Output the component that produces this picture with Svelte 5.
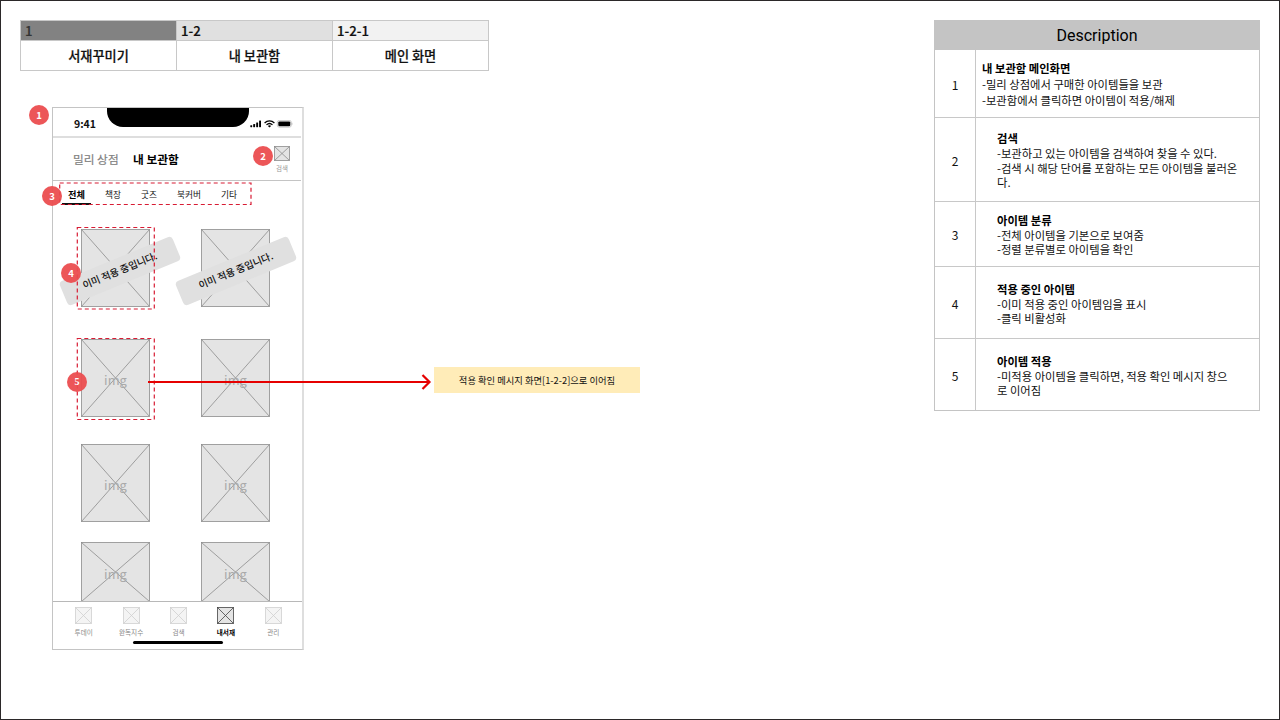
<script lang="ts">
  interface Thumb {
    height: number;
    applied?: boolean;
    /** Horizontal nudge of the "applied" ribbon from the thumb centre. */
    shift?: number;
  }

  const path = [
    { code: '1', label: '서재꾸미기' },
    { code: '1-2', label: '내 보관함' },
    { code: '1-2-1', label: '메인 화면' },
  ];

  const categories = ['전체', '책장', '굿즈', '북커버', '기타'];

  const thumbs: Thumb[] = [
    { height: 78, applied: true, shift: 5 },
    { height: 78, applied: true, shift: 1 },
    { height: 78 },
    { height: 78 },
    { height: 78 },
    { height: 78 },
    { height: 60 },
    { height: 60 },
  ];

  const navItems = ['투데이', '완독지수', '검색', '내서재', '관리'];

  const notes = [
    { title: '내 보관함 메인화면', lines: ['-밀리 상점에서 구매한 아이템들을 보관', '-보관함에서 클릭하면 아이템이 적용/해제'] },
    { title: '검색', lines: ['-보관하고 있는 아이템을 검색하여 찾을 수 있다.', '-검색 시 해당 단어를 포함하는 모든 아이템을 불러온', '다.'] },
    { title: '아이템 분류', lines: ['-전체 아이템을 기본으로 보여줌', '-정렬 분류별로 아이템을 확인'] },
    { title: '적용 중인 아이템', lines: ['-이미 적용 중인 아이템임을 표시', '-클릭 비활성화'] },
    { title: '아이템 적용', lines: ['-미적용 아이템을 클릭하면, 적용 확인 메시지 창으', '로 이어짐'] },
  ];

  let activeCategory = $state('전체');
  let activeNav = $state('내서재');
</script>

{#snippet placeholder(w: number, h: number)}
  <svg class="cross" width={w} height={h} viewBox="0 0 {w} {h}" aria-hidden="true">
    <rect x="0.5" y="0.5" width={w - 1} height={h - 1} />
    <path d="M0.5 0.5L{w - 0.5} {h - 0.5}M{w - 0.5} 0.5L0.5 {h - 0.5}" />
  </svg>
{/snippet}

<div class="board">
  <div class="left">
    <div class="path">
      {#each path as step, i}
        <div class="step">
          <div class="code level-{i + 1}">{step.code}</div>
          <div class="label">{step.label}</div>
        </div>
      {/each}
    </div>

    <div class="phone">
      <div class="status">
        <span class="time">9:41</span>
        <div class="notch"></div>
        <svg class="signals" width="43" height="8" viewBox="0 0 43 8" aria-hidden="true">
          <rect x="0.3" y="5.2" width="1.9" height="2" rx="0.4" />
          <rect x="3.2" y="4" width="1.9" height="3.2" rx="0.4" />
          <rect x="6.2" y="2.4" width="1.9" height="4.8" rx="0.4" />
          <rect x="9.1" y="0.6" width="1.9" height="6.6" rx="0.4" />
          <path class="arc" d="M14.6 2.9C17.4 0.3 21.6 0.3 24.4 2.9M16.5 4.9C18.2 3.3 20.8 3.3 22.5 4.9" />
          <path d="M17.9 6L19.5 7.6L21.1 6C20.2 5.1 18.8 5.1 17.9 6Z" />
          <rect class="shell" x="27.3" y="0.4" width="14" height="6.8" rx="2" />
          <rect x="28.3" y="1.4" width="12" height="4.8" rx="1.2" />
          <path class="tip" d="M42 2.8V4.8" />
        </svg>
      </div>

      <div class="header">
        <span class="store">밀리 상점</span>
        <span class="mine">내 보관함</span>
        <div class="search">
          {@render placeholder(16, 15)}
          <span>검색</span>
        </div>
      </div>

      <div class="categories">
        {#each categories as category}
          <button
            type="button"
            class:active={category === activeCategory}
            onclick={() => (activeCategory = category)}
          >{category}</button>
        {/each}
      </div>

      <div class="grid">
        {#each thumbs as thumb}
          <div class="thumb">
            {#if !thumb.applied}
              <span class="img" style:line-height="{thumb.height + 3}px">img</span>
            {/if}
            {@render placeholder(69, thumb.height)}
            {#if thumb.applied}
              <div class="ribbon" style:margin-left="{thumb.shift}px">이미 적용 중입니다.</div>
            {/if}
          </div>
        {/each}
      </div>

      <div class="nav">
        {#each navItems as item}
          <button type="button" class:active={item === activeNav} onclick={() => (activeNav = item)}>
            {@render placeholder(17, 17)}
            <span>{item}</span>
          </button>
        {/each}
        <div class="home"></div>
      </div>
    </div>
  </div>

  <div class="description">
    <div class="heading">Description</div>
    {#each notes as note, i}
      <div class="note note-{i + 1}">
        <div class="number">{i + 1}</div>
        <div class="text">
          <strong>{note.title}</strong>
          {#each note.lines as line}
            <span>{line}</span>
          {/each}
        </div>
      </div>
    {/each}
  </div>

  <!-- Annotations drawn over the wireframe -->
  <svg class="overlay" width="1280" height="720" viewBox="0 0 1280 720" aria-hidden="true">
    <g class="dashes">
      <rect x="59.7" y="183" width="191.3" height="21.5" />
      <rect x="77.3" y="227.5" width="77" height="81.5" />
      <rect x="77.3" y="338.5" width="77" height="81" />
    </g>
    <path class="arrow" d="M148 382H429.5M422.5 375L429.5 382L422.5 389" />
  </svg>
  <div class="callout">적용 확인 메시지 화면[1-2-2]으로 이어짐</div>
  <span class="badge b1">1</span>
  <span class="badge b2">2</span>
  <span class="badge b3">3</span>
  <span class="badge b4">4</span>
  <span class="badge b5">5</span>
</div>

<style>
  :global(body) {
    background: #fff;
  }

  .board {
    position: relative;
    box-sizing: border-box;
    display: flex;
    justify-content: space-between;
    align-items: flex-start;
    width: 1280px;
    height: 720px;
    padding: 19px 19px 0 20px;
    border: 1px solid #2b2829;
    overflow: hidden;
    color: #111;
    font-family: 'Noto Sans CJK KR', sans-serif;
    white-space: nowrap;
  }

  button {
    padding: 0;
    border: 0;
    background: none;
    color: inherit;
    font: inherit;
    cursor: pointer;
  }

  .path {
    display: flex;
    box-sizing: border-box;
    width: 469px;
    height: 51px;
    margin-left: -1px;
    border: 1px solid #c8c8c8;
    border-right: 0;
  }

  .step {
    box-sizing: border-box;
    width: 156px;
    border-right: 1px solid #c8c8c8;
    font-size: 13.2px;
    font-weight: 500;
    -webkit-text-stroke: 0.2px;
  }

  .code {
    height: 19px;
    padding-left: 4px;
    border-bottom: 1px solid #c8c8c8;
    line-height: 20px;
  }

  .level-1 {
    background: #828282;
    color: #333;
  }

  .level-2 {
    background: #e0e0e0;
  }

  .level-3 {
    background: #f2f2f2;
  }

  .label {
    line-height: 30px;
    text-align: center;
  }

  .phone {
    box-sizing: border-box;
    display: flex;
    flex-direction: column;
    width: 252px;
    height: 543px;
    margin: 36px 0 0 31px;
    border: 1px solid #c4c4c4;
    border-right: 2px solid #dedede;
  }

  .status {
    display: flex;
    box-sizing: border-box;
    height: 30px;
    margin-right: 1px;
    padding-left: 21px;
    border-bottom: 2px solid #dedede;
  }

  .time {
    width: 33px;
    font-size: 10.5px;
    font-weight: 700;
    line-height: 32px;
  }

  .notch {
    width: 142px;
    height: 19px;
    border-radius: 0 0 16px 16px;
    background: #000;
  }

  .signals {
    margin: 12px -2px 0 1px;
  }

  .signals .arc {
    fill: none;
    stroke: #000;
    stroke-width: 1.3;
  }

  .signals .shell,
  .signals .tip {
    fill: none;
    stroke: #aaa;
    stroke-width: 0.6;
  }

  .header {
    display: flex;
    box-sizing: border-box;
    height: 43px;
    margin-right: 1px;
    padding: 0 11px 0 20px;
    border-bottom: 1px solid #c4c4c4;
    font-size: 11.7px;
    line-height: 42px;
  }

  .store {
    width: 60px;
    color: #828282;
    -webkit-text-stroke: 0.2px;
  }

  .mine {
    color: #000;
    font-weight: 700;
  }

  .cross {
    display: block;
    fill: none;
    stroke: #8c8c8c;
    stroke-width: 0.8;
  }

  .cross rect {
    fill: #e4e4e4;
  }

  .search {
    display: flex;
    flex-direction: column;
    align-items: center;
    margin: 8px 0 0 auto;
    color: #999;
    font-size: 6.5px;
    line-height: 14px;
  }

  .categories {
    display: flex;
    gap: 20px;
    height: 24px;
    padding-left: 9px;
    font-size: 8.7px;
    line-height: 27px;
  }

  .categories button {
    box-sizing: border-box;
    height: 24px;
  }

  .categories .active {
    width: 29px;
    margin-right: -6px;
    border-bottom: 2px solid #111;
    color: #000;
    font-size: 9.2px;
    font-weight: 700;
  }

  .grid {
    display: grid;
    grid-template-columns: 120px 69px;
    grid-template-rows: 110px 105px 98px 60px;
    align-items: start;
    padding: 24px 0 0 28px;
  }

  .thumb {
    position: relative;
    width: 69px;
  }

  .img {
    position: absolute;
    inset: 0;
    color: #aaa;
    font-size: 12.9px;
    text-align: center;
  }

  .thumb .cross rect {
    fill: rgba(0, 0, 0, 0.105);
  }

  .ribbon {
    position: absolute;
    top: 29px;
    left: -27px;
    box-sizing: border-box;
    width: 122px;
    height: 26px;
    border-radius: 4px;
    background: #e0e0e0;
    color: #111;
    font-size: 9.8px;
    font-weight: 500;
    line-height: 25px;
    text-align: center;
    transform: rotate(-22.4deg);
  }

  .nav {
    position: relative;
    display: grid;
    grid-template-columns: repeat(5, 47.4px);
    flex: 1;
    align-items: start;
    margin-top: -1px;
    padding: 5px 0 0 7px;
    border-top: 1px solid #b8b8b8;
    color: #888;
    font-size: 6.6px;
  }

  .nav button {
    display: flex;
    flex-direction: column;
    align-items: center;
    line-height: 16px;
  }

  .nav button:not(.active) .cross {
    opacity: 0.4;
  }

  .nav .active {
    color: #000;
    font-weight: 700;
  }

  .nav .active .cross {
    stroke: #444;
  }

  .home {
    position: absolute;
    bottom: 5px;
    left: 80px;
    width: 90px;
    height: 3px;
    border-radius: 2px;
    background: #000;
  }

  .description {
    box-sizing: border-box;
    width: 326px;
    border: 1px solid #c4c4c4;
    font-size: 11.32px;
  }

  .heading {
    height: 28px;
    border-bottom: 1px solid #c4c4c4;
    background: #c4c4c4;
    color: #000;
    font-family: Roboto, sans-serif;
    font-size: 16px;
    line-height: 29px;
    text-align: center;
  }

  .note {
    display: flex;
    box-sizing: border-box;
    border-bottom: 1px solid #c8c8c8;
  }

  .note:last-child {
    border-bottom: 0;
  }

  .number {
    display: flex;
    align-items: center;
    justify-content: center;
    box-sizing: border-box;
    width: 41px;
    padding-top: 1px;
    border-right: 1px solid #c8c8c8;
    font-size: 12px;
  }

  .text {
    display: flex;
    flex-direction: column;
    justify-content: center;
    padding: 2px 0 0 21px;
    line-height: 14.7px;
  }

  .text strong {
    color: #000;
  }

  .note-1 {
    height: 68px;
  }

  .note-1 .text {
    padding: 1px 0 0 6px;
    line-height: 16px;
  }

  .note-2 {
    height: 84px;
  }

  .note-3 {
    height: 65px;
  }

  .note-4 {
    height: 72px;
  }

  .note-4 .text,
  .note-5 .text {
    padding-top: 3px;
  }

  .note-5 {
    height: 71px;
  }

  .overlay {
    position: absolute;
    top: -1px;
    left: -1px;
    fill: none;
  }

  .dashes {
    stroke: #d81c34;
    stroke-width: 1.2;
    stroke-dasharray: 4 3;
  }

  .arrow {
    stroke: #e60000;
    stroke-width: 2.2;
  }

  .callout {
    position: absolute;
    top: 366px;
    left: 433px;
    width: 206px;
    height: 26px;
    background: #ffecb8;
    font-size: 9.3px;
    line-height: 27px;
    text-align: center;
  }

  .badge {
    position: absolute;
    width: 20px;
    height: 20px;
    border-radius: 50%;
    background: rgba(235, 75, 78, 0.94);
    color: #fff;
    font-size: 9.5px;
    font-weight: 700;
    line-height: 20px;
    text-align: center;
  }

  .b1 {
    top: 104px;
    left: 28px;
  }

  .b2 {
    top: 145px;
    left: 252px;
  }

  .b3 {
    top: 185px;
    left: 41px;
  }

  .b4 {
    top: 262px;
    left: 60px;
  }

  .b5 {
    top: 371px;
    left: 66px;
    font-family: 'Liberation Serif', serif;
    font-size: 10px;
  }
</style>
